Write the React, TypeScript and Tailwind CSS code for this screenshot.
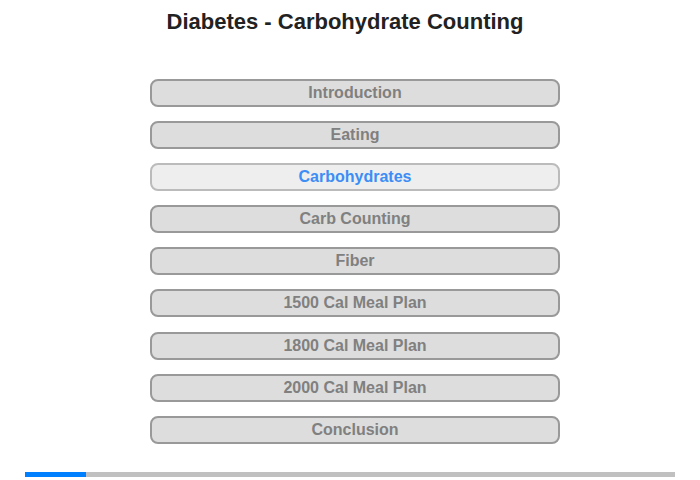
import React from 'react';

const chapters = [
  'Introduction',
  'Eating',
  'Carbohydrates',
  'Carb Counting',
  'Fiber',
  '1500 Cal Meal Plan',
  '1800 Cal Meal Plan',
  '2000 Cal Meal Plan',
  'Conclusion',
];

const activeIndex = 2;
const progress = 61 / 650;

export default function App() {
  return (
    <div
      className="w-[700px] h-[480px] bg-white relative"
      style={{ fontFamily: '"Liberation Sans", Arial, sans-serif' }}
    >
      <div className="pt-[9px] h-[79px] text-center pr-[10px]">
        <h1 className="text-[22px] leading-[26px] font-bold text-[#222222]">
          Diabetes - Carbohydrate Counting
        </h1>
      </div>

      <div className="ml-[150px] w-[410px] flex flex-col gap-[14.1px]">
        {chapters.map((title, i) => {
          const active = i === activeIndex;
          return (
            <button
              key={title}
              className={
                active
                  ? 'h-[28px] w-full rounded-[8px] border-2 border-[#bbbbbb] bg-[#eeeeee] text-[16px] leading-[24px] font-bold text-[#3c8df5]'
                  : 'h-[28px] w-full rounded-[8px] border-2 border-[#999999] bg-[#dddddd] text-[16px] leading-[24px] font-bold text-[#808080]'
              }
            >
              {title}
            </button>
          );
        })}
      </div>

      <div className="absolute left-[25px] top-[472px] w-[650px] h-[5px] bg-[#c0c0c0]">
        <div className="h-full bg-[#0080ff]" style={{ width: `${progress * 100}%` }} />
      </div>
    </div>
  );
}
